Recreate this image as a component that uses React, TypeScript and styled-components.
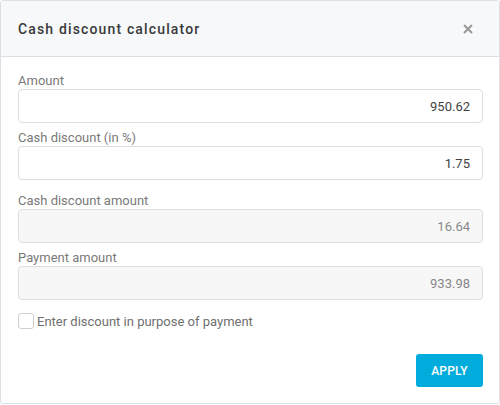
import React from "react";
import styled, { createGlobalStyle } from "styled-components";

const Global = createGlobalStyle`
  html, body { margin: 0; padding: 0; background: #fff; }
  body { font-family: Roboto, "Liberation Sans", Arial, sans-serif; }
  * { box-sizing: border-box; }
`;

const Dialog = styled.div`
  width: 500px;
  height: 404px;
  border: 1px solid #dcdfe3;
  border-radius: 3px;
  background: #fff;
  display: flex;
  flex-direction: column;
  overflow: hidden;
`;

const Header = styled.div`
  height: 56px;
  flex: none;
  background: #f7f8fa;
  border-bottom: 1px solid #dcdfe3;
  display: flex;
  align-items: center;
  justify-content: space-between;
  padding: 0 24px 0 17px;
`;

const Title = styled.h2`
  margin: 0;
  font-size: 14px;
  font-weight: 500;
  letter-spacing: 1.15px;
  color: #3a3a3a;
`;

const Close = styled.button`
  border: 0;
  background: none;
  padding: 0;
  width: 14px;
  height: 14px;
  display: flex;
  align-items: center;
  justify-content: center;
  cursor: pointer;
`;

const Body = styled.div`
  flex: 1;
  padding: 15px 16px 0 17px;
  display: flex;
  flex-direction: column;
`;

const Field = styled.div<{ $gap?: number }>`
  display: flex;
  flex-direction: column;
  margin-bottom: ${(p) => p.$gap ?? 6}px;
`;

const Label = styled.label`
  font-size: 13px;
  line-height: 17px;
  color: #7a7a7a;
`;

const Input = styled.input<{ $readonly?: boolean }>`
  height: 34px;
  width: 100%;
  border: 1px solid #dedede;
  border-radius: 4px;
  background: ${(p) => (p.$readonly ? "#f7f7f7" : "#fff")};
  color: ${(p) => (p.$readonly ? "#888" : "#444")};
  font-family: inherit;
  font-size: 13px;
  text-align: right;
  padding: 0 12px;
  outline: none;
`;

const CheckRow = styled.label`
  display: flex;
  align-items: center;
  gap: 3px;
  margin-top: 7px;
  font-size: 13px;
  color: #6f6f6f;
`;

const Box = styled.span`
  width: 16px;
  height: 16px;
  border: 1px solid #cfcfcf;
  border-radius: 3px;
  background: #fff;
  flex: none;
`;

const Footer = styled.div`
  display: flex;
  justify-content: flex-end;
  padding: 0 16px 16px 17px;
`;

const Apply = styled.button`
  width: 67px;
  height: 33px;
  border: 0;
  border-radius: 3px;
  background: #00acdb;
  color: #fff;
  font-family: inherit;
  font-size: 12px;
  font-weight: 500;
  letter-spacing: 0.2px;
`;

export default function App() {
  return (
    <>
      <Global />
      <Dialog>
        <Header>
          <Title>Cash discount calculator</Title>
          <Close aria-label="close">
            <svg width="10" height="10" viewBox="0 0 10 10">
              <path d="M1 1L9 9M9 1L1 9" stroke="#999" strokeWidth="2" strokeLinecap="butt" />
            </svg>
          </Close>
        </Header>
        <Body>
          <Field>
            <Label>Amount</Label>
            <Input defaultValue="950.62" />
          </Field>
          <Field $gap={12}>
            <Label>Cash discount (in %)</Label>
            <Input defaultValue="1.75" />
          </Field>
          <Field>
            <Label>Cash discount amount</Label>
            <Input $readonly readOnly value="16.64" />
          </Field>
          <Field>
            <Label>Payment amount</Label>
            <Input $readonly readOnly value="933.98" />
          </Field>
          <CheckRow>
            <Box />
            Enter discount in purpose of payment
          </CheckRow>
        </Body>
        <Footer>
          <Apply>APPLY</Apply>
        </Footer>
      </Dialog>
    </>
  );
}
